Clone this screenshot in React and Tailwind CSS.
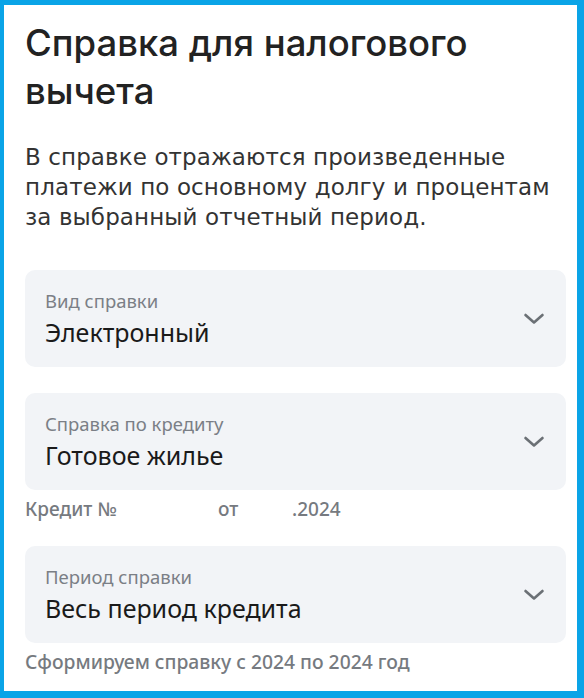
import React from "react";

const Chevron = () => (
  <svg width="22" height="12" viewBox="0 0 22 12" fill="none" className="shrink-0">
    <path d="M2.5 2l8.5 7.5 8.5-7.5" stroke="#6b7075" strokeWidth="2.6" strokeLinecap="round" strokeLinejoin="round" />
  </svg>
);

const SelectField = ({ label, value }) => (
  <div className="flex items-center justify-between rounded-[10px] bg-[#f2f4f7] h-[97px] pl-[20px] pr-[21px]">
    <div className="flex flex-col">
      <span className="text-[18.5px] leading-[21px] text-[#7b7f86]">{label}</span>
      <span className="mt-[5px] text-[25px] leading-[32px] text-[#1a1a1a]">{value}</span>
    </div>
    <Chevron />
  </div>
);

export default function App() {
  return (
    <div className="w-[584px] h-[698px] bg-white border-[#0aa4e7] border-l-4 border-t-[5px] border-r-[7px] border-b-[7px] pl-[21px] pr-[11px] pt-[14px] font-['Noto_Sans',sans-serif]">
      {/* Title */}
      <h1 className="font-['Inter',sans-serif] font-medium text-[36.5px] leading-[48px] text-[#222222] whitespace-nowrap">
        Справка для налогового
        <br />
        вычета
      </h1>

      <p className="mt-[27px] font-['DejaVu_Sans',sans-serif] text-[23px] leading-[30px] tracking-[0.1px] text-[#333333] whitespace-nowrap">
        В справке отражаются произведенные
        <br />
        платежи по основному долгу и процентам
        <br />
        за выбранный отчетный период.
      </p>

      <div className="mt-[38px]">
        <SelectField label="Вид справки" value="Электронный" />
      </div>

      <div className="mt-[26px]">
        <SelectField label="Справка по кредиту" value="Готовое жилье" />
        <div className="mt-[8px] flex text-[19px] leading-[22px] font-medium text-[#767a80]">
          <span className="w-[193px]">Кредит №</span>
          <span className="w-[74px]">от</span>
          <span>.2024</span>
        </div>
      </div>

      <div className="mt-[26px]">
        <SelectField label="Период справки" value="Весь период кредита" />
        <p className="mt-[8px] text-[19.3px] leading-[22px] font-medium text-[#767a80]">
          Сформируем справку с 2024 по 2024 год
        </p>
      </div>
    </div>
  );
}
